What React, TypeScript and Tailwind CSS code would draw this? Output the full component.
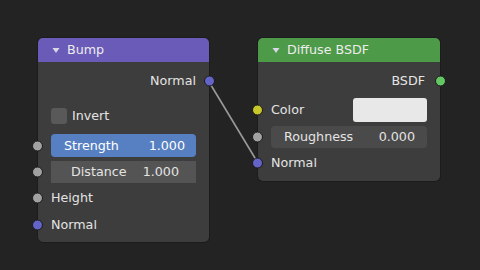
import React from "react"

type SocketProps = { color: string; side: "left" | "right" }

function Socket({ color, side }: SocketProps) {
  return (
    <span
      className={`absolute top-1/2 -translate-y-1/2 w-[11px] h-[11px] rounded-full border border-[#1b1b1b] ${
        side === "left" ? "left-[-6px]" : "right-[-6px]"
      } ${color}`}
    />
  )
}

function Caret() {
  return (
    <svg width="8" height="7" viewBox="0 0 8 7" className="shrink-0">
      <path d="M0.5 1 L7.5 1 L4 6 Z" fill="#d8d8e6" />
    </svg>
  )
}

function Header({ title, color }: { title: string; color: string }) {
  return (
    <div className={`h-6 flex items-center pl-[14px] gap-[7px] rounded-t-[5px] ${color}`}>
      <Caret />
      <span className="text-[#ececec]">{title}</span>
    </div>
  )
}

export default function App() {
  return (
    <div
      className="relative w-[480px] h-[270px] overflow-hidden bg-[#232323] text-[12.7px] text-[#e4e4e4]"
      style={{ fontFamily: '"DejaVu Sans", sans-serif' }}
    >
      {/* link */}
      <svg className="absolute inset-0" width="480" height="270">
        <line x1="208.5" y1="81" x2="258" y2="163" stroke="#9a9a9a" strokeWidth="1.6" />
      </svg>

      {/* Bump node */}
      <div className="absolute left-[38px] top-[38px] w-[171px] h-[204px] rounded-[5px] bg-[#3d3d3d] shadow-[0_0_0_1px_#1c1c1c]">
        <Header title="Bump" color="bg-[#6a5bb8]" />
        <div className="pt-[7px]">
          <div className="relative h-6 flex items-center justify-end pr-[13px]">
            Normal
            <Socket color="bg-[#6464c8]" side="right" />
          </div>
          <div className="mt-[11px] h-6 flex items-center gap-[5px] pl-[13px]">
            <span className="w-4 h-4 rounded-[3px] bg-[#595959]" />
            Invert
          </div>
          <div className="relative mt-[6px] h-[23px] px-[13px]">
            <div className="h-full flex items-center justify-between pl-[13px] pr-[11px] rounded-[4px] bg-[#5680c2] text-white">
              <span>Strength</span>
              <span>1.000</span>
            </div>
            <Socket color="bg-[#a1a1a1]" side="left" />
          </div>
          <div className="relative mt-[4px] h-[22px] px-[13px]">
            <div className="h-full flex items-center justify-between pl-[20px] pr-[17px] bg-[#545454]">
              <span>Distance</span>
              <span>1.000</span>
            </div>
            <Socket color="bg-[#a1a1a1]" side="left" />
          </div>
          <div className="relative mt-[3px] h-6 flex items-center pl-[13px]">
            Height
            <Socket color="bg-[#a1a1a1]" side="left" />
          </div>
          <div className="relative mt-[3px] h-6 flex items-center pl-[13px]">
            Normal
            <Socket color="bg-[#6464c8]" side="left" />
          </div>
        </div>
      </div>

      {/* Diffuse BSDF node */}
      <div className="absolute left-[258px] top-[38px] w-[182px] h-[143px] rounded-[5px] bg-[#3d3d3d] shadow-[0_0_0_1px_#1c1c1c]">
        <Header title="Diffuse BSDF" color="bg-[#4d9a48]" />
        <div className="pt-[7px]">
          <div className="relative h-6 flex items-center justify-end pr-[15px]">
            BSDF
            <Socket color="bg-[#63c763]" side="right" />
          </div>
          <div className="relative mt-[5px] h-6 flex items-center justify-between pl-[13px] pr-[13px]">
            <span>Color</span>
            <span className="w-[74px] h-6 rounded-[3px] bg-[#e8e8e8]" />
            <Socket color="bg-[#c7c729]" side="left" />
          </div>
          <div className="relative mt-[4px] h-[22px] px-[13px]">
            <div className="h-full flex items-center justify-between pl-[13px] pr-[12px] rounded-[4px] bg-[#4a4a4a]">
              <span>Roughness</span>
              <span>0.000</span>
            </div>
            <Socket color="bg-[#a1a1a1]" side="left" />
          </div>
          <div className="relative mt-[3px] h-6 flex items-center pl-[13px]">
            Normal
            <Socket color="bg-[#6464c8]" side="left" />
          </div>
        </div>
      </div>
    </div>
  )
}
